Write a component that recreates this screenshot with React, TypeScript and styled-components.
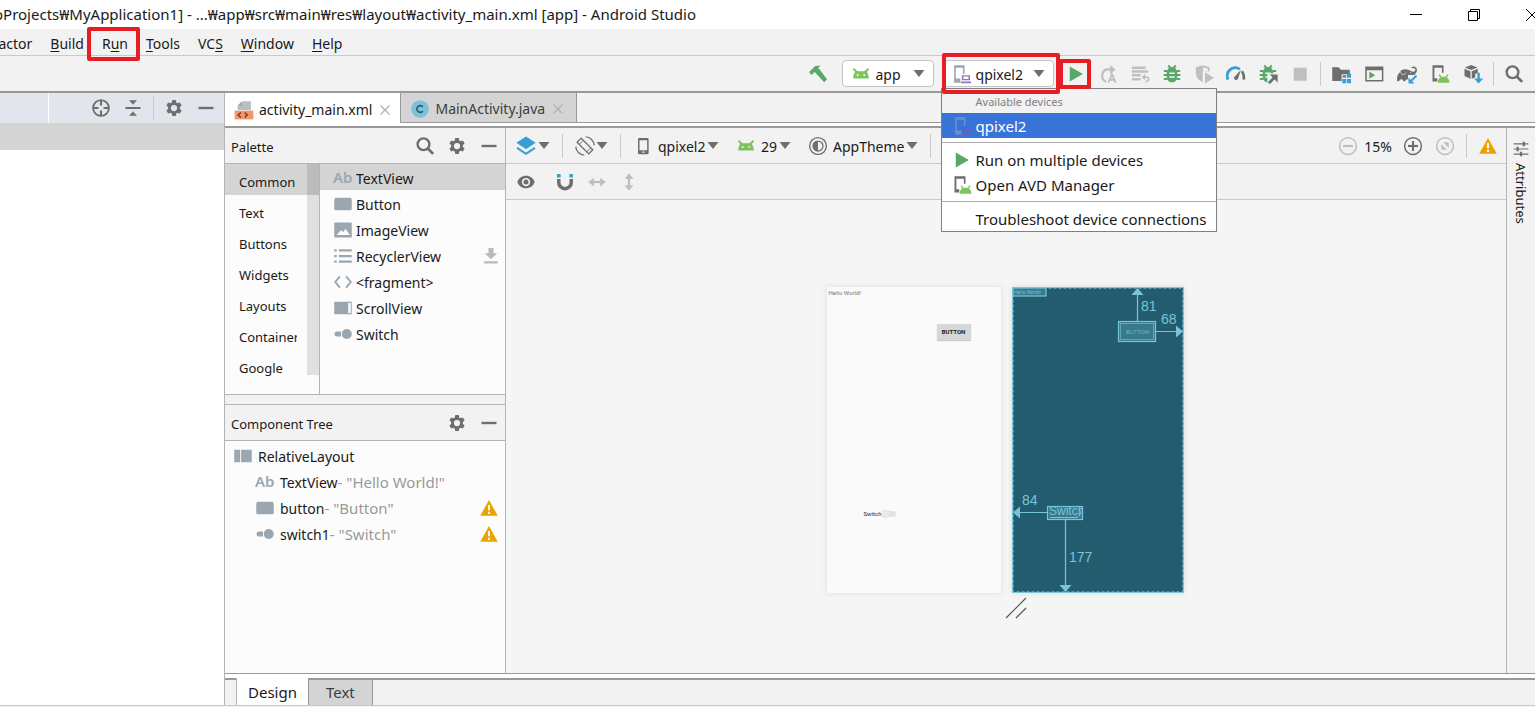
import React from 'react';
import styled, { createGlobalStyle, css } from 'styled-components';
import { SiGradle } from 'react-icons/si';

const c = {
  bar: '#f2f2f2',
  line: '#c9c9c9',
  mid: '#b4b4b4',
  dark: '#999999',
  selected: '#d4d4d4',
  icon: '#6e6e6e',
  off: '#bfbfbf',
  steel: '#9aa7b0',
  green: '#59a869',
  lime: '#7dc35b',
  blue: '#389fd6',
  red: '#e81c24',
  text: '#1a1a1a',
};

const GlobalStyle = createGlobalStyle`
  * { box-sizing: border-box; }
  body {
    margin: 0;
    overflow: hidden;
    background: ${c.bar};
    color: ${c.text};
    font-family: "Noto Sans", "Open Sans", "Noto Sans CJK KR", sans-serif;
    font-size: 14px;
    line-height: 20px;
  }
  button, select {
    margin: 0;
    padding: 0;
    border: 0;
    background: none;
    color: inherit;
    font: inherit;
    text-align: left;
    white-space: nowrap;
  }
  ul { list-style: none; margin: 0; padding: 0; }
  h2 { margin: 0; font-size: 13px; font-weight: 400; }
  svg { display: block; flex: none; }
`;

/* ---------- shared parts ---------- */

const Svg = styled.svg<{ $size?: number }>`
  width: ${(p) => p.$size ?? 20}px;
  height: ${(p) => p.$size ?? 20}px;
`;

const Icon = ({ size, children }: { size?: number; children: React.ReactNode }) => (
  <Svg $size={size} viewBox="0 0 16 16" fill="none" aria-hidden="true">
    {children}
  </Svg>
);

const CaretSvg = styled.svg`
  width: 12px;
  height: 8px;
  pointer-events: none;
`;
const Caret = () => (
  <CaretSvg viewBox="0 0 12 8" aria-hidden="true">
    <path d="M.5 0h11L6 7z" fill={c.icon} />
  </CaretSvg>
);

const Divider = styled.span<{ $gap?: number }>`
  width: 1px;
  height: 24px;
  margin: 0 ${(p) => p.$gap ?? 4}px;
  background: ${c.line};
  flex: none;
`;

const Spacer = styled.span`
  flex: 1;
`;

const IconButton = styled.button<{ $w?: number }>`
  width: ${(p) => p.$w ?? 32}px;
  height: 28px;
  display: flex;
  align-items: center;
  justify-content: center;
  flex: none;
`;

const marked = css`
  position: relative;
  &::after {
    content: '';
    position: absolute;
    z-index: 5;
    border: 4px solid ${c.red};
    border-radius: 2px;
    pointer-events: none;
  }
`;

/* ---------- icons ---------- */

const Gear = () => (
  <Icon>
    <path
      fill={c.icon}
      fillRule="evenodd"
      d="M6.6 1.6h2.8l.4 1.9 1.1.6 1.8-.6 1.4 2.4-1.4 1.3v1.5l1.4 1.3-1.4 2.4-1.8-.6-1.1.6-.4 2H6.6l-.4-2-1.1-.6-1.8.6-1.4-2.4 1.4-1.3V7.200L1.900 5.900l1.400-2.400 1.800.6 1.100-.6zM8 5.500a2.500 2.500 0 1 0 0 5 2.500 2.500 0 0 0 0-5z"
    />
  </Icon>
);
const Minus = () => (
  <Icon>
    <path d="M2 8h12" stroke={c.icon} strokeWidth="1.900" />
  </Icon>
);
const Search = () => (
  <Icon>
    <circle cx="6.800" cy="6.600" r="4.700" stroke={c.icon} strokeWidth="1.900" />
    <path d="M10.200 10l4.300 4.300" stroke={c.icon} strokeWidth="2.200" />
  </Icon>
);
const AndroidHead = ({ size }: { size?: number }) => (
  <Icon size={size}>
    <path d="M2 3.800l3 3M14 3.800l-3 3" stroke={c.lime} strokeWidth="1.500" />
    <path
      fill={c.lime}
      fillRule="evenodd"
      d="M1.800 11.500c0-2.300.8-4.300 2.200-5.900 1 .3 2.400.1 4 .1s3 .2 4-.1c1.400 1.600 2.200 3.600 2.200 5.900zM5.400 8a.8.8 0 1 0 0 1.600.8.8 0 0 0 0-1.600zm5.200 0a.8.8 0 1 0 0 1.600.8.8 0 0 0 0-1.600z"
    />
  </Icon>
);
const Hammer = () => (
  <Icon>
    <path
      fill={c.green}
      d="M.8 6.300L5.800 1.500l4.400-.4L8 3.200l1.300 1.200 5.900 7.800-2.300 2.300-6.800-7.400-.9-.8-2.300 2.500z"
    />
  </Icon>
);
const DevicePhone = ({ faded }: { faded?: boolean }) => (
  <Icon>
    <g opacity={faded ? 0.75 : 1}>
      <path
        fill={faded ? '#7f99c4' : c.steel}
        fillRule="evenodd"
        d="M2.500 1h8.300v7h-1.300V3H3.800v8.500h3.700V15H2.500z"
      />
      <path
        fill={faded ? '#7a55b0' : '#9575b8'}
        fillRule="evenodd"
        d="M8.700 9h6.500v4H8.700zm1.200 1v2H14v-2zM7.900 14H16v1.300H7.900z"
      />
    </g>
  </Icon>
);
const Play = () => (
  <Icon>
    <path d="M3 2v12L13.500 8z" fill={c.green} />
  </Icon>
);
const ApplyChanges = () => (
  <Icon>
    <path d="M6.500 14.200A5.300 5.300 0 0 1 7 4.300h4" stroke={c.off} strokeWidth="1.800" />
    <path d="M9.700.8l4.300 3.700-4.300 3.700z" fill={c.off} />
    <path d="M8.300 15l2.900-6.700L14.100 15M9.300 12.700h3.800" stroke={c.off} strokeWidth="1.500" />
  </Icon>
);
const ApplyCode = () => (
  <Icon>
    <path d="M1.500 3h11M1.500 6h13M1.500 9h7M1.500 12.200h7" stroke={c.off} strokeWidth="1.900" />
    <path d="M10.500 10.500h3a1.800 1.800 0 0 1 0 3.500h-1" stroke={c.off} strokeWidth="1.400" />
    <path d="M12 7.800v5.400L9.300 10.500z" fill={c.off} />
  </Icon>
);
const bug = (
  <>
    <path
      d="M5 1.200l1.800 2M11 1.200l-1.800 2M1.500 5.500h3M11.500 5.500h3M1.300 8.700h3M11.700 8.700h3M1.500 12h3M11.500 12h3"
      stroke={c.green}
      strokeWidth="1.600"
    />
    <path
      fill={c.green}
      fillRule="evenodd"
      d="M4.300 5C4.800 3.200 6 2.300 8 2.300S11.200 3.200 11.700 5c.6 1 .6 2 .6 3.500 0 4-1.500 6.200-4.300 6.200s-4.300-2.200-4.300-6.200c0-1.500 0-2.500.6-3.500zM5.800 6.700v1.200h4.400V6.700zm0 3v1.200h4.400V9.700z"
    />
  </>
);
const Debug = () => <Icon>{bug}</Icon>;
const AttachDebug = () => (
  <Icon>
    {bug}
    <path d="M7.500 7.500H16V16H7.500z" fill={c.bar} />
    <path d="M8.700 15.300L13.500 10.500" stroke={c.icon} strokeWidth="2.200" />
    <path d="M9.300 8.300h6.400v6.400z" fill={c.icon} />
  </Icon>
);
const Coverage = () => (
  <Icon>
    <path
      fill={c.off}
      fillRule="evenodd"
      d="M1.500 2.500L7 1l5.500 1.500V6H7v8.500C3.500 13 1.500 10.500 1.500 7zM7.200 2.700v3h3.800V3.600z"
    />
    <path d="M8.800 6.500v9L16 11z" fill={c.off} />
  </Icon>
);
const Profiler = () => (
  <Icon>
    <path d="M1.700 12.500A6.400 6.400 0 0 1 11 4.200" stroke={c.blue} strokeWidth="2.300" />
    <path d="M12.700 5.800c1.300 1.700 1.900 3.900 1.600 6.700" stroke={c.icon} strokeWidth="2" />
    <path d="M12 4.500L9.500 12a1.700 1.700 0 0 1-3-1.500z" fill={c.icon} />
  </Icon>
);
const Stop = () => (
  <Icon>
    <path d="M3 3h10.400v10.400H3z" fill={c.off} />
  </Icon>
);
const Structure = () => (
  <Icon>
    <path d="M1 2.500h5.200l1.600 2H15v3.700H8.500v5.300H1z" fill={c.icon} />
    <path d="M12.800 7.800H16v3.200h-3.200zM9 12h3.200v3.300H9zM12.800 12H16v3.300h-3.200z" fill={c.blue} />
    <path d="M9.300 8.800h2.900v2.200H9.300z" fill={c.blue} />
  </Icon>
);
const RunWindow = () => (
  <Icon>
    <path fill={c.icon} fillRule="evenodd" d="M1 2h14.500v12H1zm1.200 3v7.800h12.100V5z" />
    <path d="M4.200 6v5.800L9 8.900z" fill={c.green} />
  </Icon>
);
const GradleWrap = styled.span`
  position: relative;
  width: 20px;
  height: 20px;
  color: ${c.icon};
`;
const GradleArrow = styled.span`
  position: absolute;
  right: 0;
  bottom: 0;
  background: ${c.bar};
`;
const GradleSync = () => (
  <GradleWrap>
    <SiGradle size={20} />
    <GradleArrow>
      <Svg $size={9} viewBox="0 0 9 9" aria-hidden="true">
        <path d="M8.500.5L3 6" stroke={c.blue} strokeWidth="2" />
        <path d="M.5 2.500v6h6z" fill={c.blue} />
      </Svg>
    </GradleArrow>
  </GradleWrap>
);
const Avd = () => (
  <Icon>
    <path fill={c.icon} fillRule="evenodd" d="M2 1h8.800v6H9.500V3H3.500v8.300h2.300V14H2z" />
    <path d="M6 15c.2-2.800 1.800-4.800 4.800-4.800s4.600 2 4.800 4.800z" fill={c.lime} />
    <path d="M7.300 8.500L9 11M14.300 8.500L12.600 11" stroke={c.lime} strokeWidth="1.100" />
  </Icon>
);
const Sdk = () => (
  <Icon>
    <path d="M6.500.8l5 2-5 2-5-2z" fill={c.icon} />
    <path d="M1.200 3.800L6 5.700v6.100L1.200 9.600zM7 5.700l4.800-1.900v3.700H9.800v3L7 11.800z" fill={c.icon} />
    <path d="M12.500 7v6" stroke={c.blue} strokeWidth="1.900" />
    <path d="M8.800 11.500h7.400L12.500 15.500z" fill={c.blue} />
  </Icon>
);
const Target = () => (
  <Icon>
    <circle cx="8" cy="8" r="6.300" stroke={c.icon} strokeWidth="1.500" />
    <path d="M8 2v4M8 10v4M2 8h4M10 8h4" stroke={c.icon} strokeWidth="1.700" />
  </Icon>
);
const Collapse = () => (
  <Icon>
    <path d="M2 8h12" stroke={c.icon} strokeWidth="1.600" />
    <path d="M4.800 1.800h6.400L8 5.300zM4.800 14.200h6.400L8 10.700z" fill={c.icon} />
  </Icon>
);
const XmlFile = () => (
  <Icon>
    <path d="M7 1h6.500v7H3V5z" fill="#b7c0c7" />
    <path d="M6.300 1v3.500H2.800z" fill="#9aa7b0" />
    <path d="M.5 8.500h15v7H.5z" fill="#f4956c" />
    <path d="M5.500 10L3.300 12l2.200 2M8.500 10l2.200 2-2.200 2" stroke="#6b3a26" strokeWidth="1.100" />
  </Icon>
);
const JavaClass = () => (
  <Icon>
    <circle cx="8" cy="8" r="7" fill="#7bc1d9" />
    <path d="M10.300 6.300a2.700 2.700 0 1 0 0 3.400" stroke="#33576a" strokeWidth="1.300" />
  </Icon>
);
const CloseX = () => (
  <Icon size={16}>
    <path d="M3.500 3.500l9 9M12.500 3.500l-9 9" stroke="#b0b0b0" strokeWidth="1.200" />
  </Icon>
);
const Layers = () => (
  <Icon size={22}>
    <path d="M8 1l7 4.700L8 10.400 1 5.700z" fill={c.blue} />
    <path d="M1.500 9.300L8 13.700l6.500-4.400" stroke={c.blue} strokeWidth="1.500" />
  </Icon>
);
const Rotate = () => (
  <Icon>
    <path d="M4.900 1.700l9.300 9.300-3.200 3.300L1.700 5z" stroke={c.icon} strokeWidth="1.100" />
    <path d="M8.500.6a7.400 7.400 0 0 1 6.900 6.900M7.500 15.400A7.400 7.400 0 0 1 .6 8.500" stroke={c.icon} strokeWidth="1" />
    <path d="M3.300 6.700l3.300-3.200M9.400 12.700l3.300-3.200" stroke={c.icon} strokeWidth=".8" />
  </Icon>
);
const Phone = () => (
  <Icon>
    <path
      fill={c.icon}
      fillRule="evenodd"
      d="M5 1.500h6.500a1 1 0 0 1 1 1v11a1 1 0 0 1-1 1H5a1 1 0 0 1-1-1v-11a1 1 0 0 1 1-1zM5.200 3.300v8h6.100v-8zM7.400 12.400v1h1.800v-1z"
    />
  </Icon>
);
const Theme = () => (
  <Icon>
    <circle cx="8" cy="8" r="6.700" stroke={c.icon} strokeWidth="1.100" />
    <circle cx="8" cy="8" r="4" stroke={c.icon} />
    <path d="M8 4a4 4 0 0 0 0 8z" fill={c.icon} />
  </Icon>
);
const Zoom = ({ kind }: { kind: 'out' | 'in' | 'fit' }) => {
  const color = kind === 'in' ? c.icon : c.off;
  return (
    <Icon>
      <circle cx="8" cy="8" r="6.700" stroke={color} strokeWidth="1.200" />
      {kind !== 'fit' && <path d="M4 8h8" stroke={color} strokeWidth="1.700" />}
      {kind === 'in' && <path d="M8 4v8" stroke={color} strokeWidth="1.700" />}
      {kind === 'fit' && <path d="M6.500 5H11v4.500zM5 6.500V11h4.500z" fill={color} />}
    </Icon>
  );
};
const Warning = () => (
  <Icon>
    <path d="M8 1.500l7 12.700H1z" fill="#eda200" />
    <path d="M8 5.500v4.300M8 11v1.700" stroke="#fff" strokeWidth="1.600" />
  </Icon>
);
const Eye = () => (
  <Icon>
    <path
      fill={c.icon}
      fillRule="evenodd"
      d="M8 3c3.300 0 5.900 2 7 5-1.100 3-3.700 5-7 5S2.100 11 1 8c1.100-3 3.700-5 7-5zm0 1.700a3.300 3.300 0 1 0 0 6.600 3.300 3.300 0 0 0 0-6.600z"
    />
    <circle cx="8" cy="8" r="2" fill={c.icon} />
  </Icon>
);
const Magnet = () => (
  <Icon>
    <path d="M3 5.500V8.300a5 5 0 0 0 10 0V5.500" stroke={c.icon} strokeWidth="2.800" />
    <path d="M1.600 1.500h2.900v2.800H1.600zM11.500 1.500h2.900v2.800h-2.900z" fill={c.blue} />
  </Icon>
);
const Arrows = ({ vertical }: { vertical?: boolean }) => (
  <Icon>
    <g transform={vertical ? 'rotate(90 8 8)' : undefined}>
      <path d="M3 8h10" stroke={c.off} strokeWidth="1.800" />
      <path d="M5.500 4.500V11.500L1 8zM10.500 4.500V11.500L15 8z" fill={c.off} />
    </g>
  </Icon>
);
const Sliders = () => (
  <Icon size={18}>
    <path d="M1.500 3.500h13M1.500 8h13M1.500 12.500h13" stroke={c.icon} strokeWidth="1.100" />
    <path d="M10.500 1.500v4M5 6v4M8 10.500v4" stroke={c.icon} strokeWidth="2" />
  </Icon>
);
const Download = () => (
  <Icon>
    <path d="M6 1.500h4v4.300h3L8 10.500 3 5.800h3zM2.500 12.200h11V14h-11z" fill="#b3bcc3" />
  </Icon>
);
const WidgetIcon = ({ kind }: { kind: string }) => (
  <Icon>
    {kind === 'text' && (
      <text x="0" y="12.300" fontSize="12" fontWeight="600" fontFamily="Noto Sans" fill={c.steel}>
        Ab
      </text>
    )}
    {kind === 'button' && <rect x="1" y="3" width="14" height="10" rx="1.500" fill={c.steel} />}
    {kind === 'image' && (
      <path fill={c.steel} fillRule="evenodd" d="M1 2h14v12H1zM3 12h10.500l-3.500-5-2 2.800L6.500 8z" />
    )}
    {kind === 'list' && (
      <path
        d="M1 3.500h2M4.700 3.500H15M1 8h2M4.700 8H15M1 12.500h2M4.700 12.500H15"
        stroke={c.steel}
        strokeWidth="1.800"
      />
    )}
    {kind === 'fragment' && (
      <path d="M5.500 3.500L1.800 8l3.700 4.500M10.500 3.500L14.200 8l-3.700 4.500" stroke={c.steel} strokeWidth="1.500" />
    )}
    {kind === 'scroll' && (
      <path fill={c.steel} fillRule="evenodd" d="M1 3h14v10H1zM12.200 4v8h2V4z" />
    )}
    {kind === 'switch' && (
      <>
        <path d="M3.200 6h3.200v4H3.200a2 2 0 0 1 0-4z" fill={c.steel} />
        <circle cx="11" cy="8" r="4" fill={c.steel} />
      </>
    )}
    {kind === 'layout' && <path d="M1 3h4.700v10H1zM6.500 3H15v10H6.500z" fill={c.steel} />}
  </Icon>
);

/* ---------- title bar, menu bar, toolbar ---------- */

const Window = styled.div`
  min-height: 100vh;
  display: flex;
  flex-direction: column;
`;

const TitleBar = styled.header`
  height: 29px;
  display: flex;
  align-items: center;
  justify-content: space-between;
  background: #fff;
  overflow: hidden;
`;
const Title = styled.span`
  margin-left: -6px;
  padding-bottom: 1px;
  font-size: 15px;
  white-space: nowrap;
`;
const WindowButtons = styled.div`
  display: flex;
  margin-right: -26px;
`;
const WindowButton = styled(IconButton)`
  width: 58px;
  svg { width: 12px; height: 12px; }
`;

const MenuBar = styled.nav`
  height: 27px;
  display: flex;
  align-items: center;
  gap: 18px;
  padding-top: 3px;
  border-bottom: 1px solid ${c.line};
  u { text-underline-offset: 2px; }
`;
const MenuItem = styled.button<{ $marked?: boolean; $cut?: boolean }>`
  ${(p) => p.$cut && 'margin-left: -23px;'}
  ${(p) =>
    p.$marked &&
    css`
      ${marked}
      &::after { inset: -7px -12px -7px -15px; }
    `}
`;

const Toolbar = styled.div`
  height: 37px;
  display: flex;
  align-items: center;
  justify-content: flex-end;
  padding-right: 5px;
  border-bottom: 2px solid ${c.dark};
`;
const ToolGroup = styled.div<{ $gap?: number }>`
  display: flex;
  align-items: center;
  gap: ${(p) => p.$gap ?? 0}px;
`;
const comboBox = css`
  height: 27px;
  display: flex;
  align-items: center;
  gap: 5px;
  padding: 0 8px;
  border: 1px solid #c4c4c4;
  border-radius: 4px;
  background: #fff;
`;
const Combo = styled.label`
  ${comboBox}
  margin: 0 8px;
`;
const PlainSelect = styled.select`
  appearance: none;
  padding-top: 3px;
  outline: none;
`;
const ComboGap = styled.span`
  width: 1px;
`;
const DeviceWrap = styled.div`
  ${marked}
  &::after { inset: -7px -6px -7px 0; }
`;
const DeviceCombo = styled.button`
  ${comboBox}
  span { padding: 3px 5px 0 0; }
`;
const RunButton = styled(IconButton)`
  ${marked}
  margin-left: 6px;
  &::after { inset: -1px 1px -1px -1px; }
`;

const Popup = styled.div`
  position: absolute;
  z-index: 4;
  top: 28px;
  left: -1px;
  width: 276px;
  background: #fff;
  border: 1px solid #808080;
`;
const PopupTitle = styled.div`
  height: 24px;
  padding-left: 34px;
  background: ${c.bar};
  color: #808080;
  font-size: 11px;
  line-height: 26px;
`;
const PopupItem = styled.button<{ $active?: boolean }>`
  width: 100%;
  height: 25px;
  display: flex;
  align-items: center;
  gap: 4px;
  padding-left: 10px;
  font-size: 15px;
  ${(p) => p.$active && 'background: #3874d8; color: #fff;'}
  span:only-child { padding-left: 24px; }
`;
const PopupLine = styled.hr`
  height: 1px;
  margin: 4px 0;
  border: 0;
  background: #adadad;
`;

/* ---------- body ---------- */

const Body = styled.div`
  flex: 1;
  display: flex;
  min-height: 0;
`;
const ProjectPane = styled.aside`
  width: 224px;
  flex: none;
  background: #fff;
`;
const ProjectHeader = styled.div`
  height: 30px;
  display: flex;
  align-items: center;
  padding-right: 2px;
  background: #e2e6ec;
`;
const HeaderStub = styled.span`
  width: 49px;
  height: 30px;
  border-right: 1px solid #fff;
`;
const ProjectRow = styled.div`
  height: 27px;
  background: ${c.selected};
`;

const Editor = styled.main`
  flex: 1;
  min-width: 0;
  display: flex;
  flex-direction: column;
  border-left: 1px solid ${c.mid};
`;
const TabBar = styled.div`
  height: 30px;
  display: flex;
  border-bottom: 1px solid ${c.dark};
`;
const Tab = styled.button<{ $active?: boolean }>`
  height: ${(p) => (p.$active ? 30 : 29)}px;
  display: flex;
  align-items: center;
  gap: 5px;
  padding: 3px ${(p) => (p.$active ? 7 : 10)}px 0 9px;
  background: ${(p) => (p.$active ? '#fff' : c.selected)};
  ${(p) => !p.$active && `border-left: 1px solid ${c.dark}; border-right: 1px solid ${c.dark}; color: #3c3c3c;`}
`;
const Strip = styled.div<{ $bottom?: boolean }>`
  height: ${(p) => (p.$bottom ? 7 : 5)}px;
  background: #fff;
  border-bottom: 2px solid ${c.dark};
  ${(p) => p.$bottom && `border-top: 1px solid ${c.dark};`}
`;
const Work = styled.div`
  flex: 1;
  display: flex;
`;
const SideColumn = styled.section`
  width: 281px;
  flex: none;
  display: flex;
  flex-direction: column;
  border-right: 1px solid ${c.mid};
`;
const PanelHeader = styled.div`
  height: 36px;
  display: flex;
  align-items: center;
  padding-left: 6px;
  border-bottom: 1px solid ${c.mid};
  h2 { padding-top: 2px; }
`;
const PaletteBody = styled.div`
  height: 231px;
  display: flex;
  background: #fcfcfc;
  border-bottom: 1px solid ${c.mid};
`;
const Categories = styled.div`
  position: relative;
  width: 95px;
  flex: none;
  border-right: 1px solid ${c.mid};
`;
const Scrollbar = styled.div`
  position: absolute;
  top: 0;
  right: 0;
  width: 12px;
  height: 211px;
  background: rgba(0, 0, 0, 0.11);
`;
const Category = styled.button<{ $active?: boolean }>`
  display: block;
  width: 100%;
  height: 31px;
  padding: 4px 22px 0 14px;
  font-size: 13px;
  ${(p) => p.$active && `background: ${c.selected};`}
  span { display: block; overflow: hidden; }
`;
const WidgetList = styled.ul`
  flex: 1;
`;
const Row = styled.button<{ $active?: boolean; $depth?: number }>`
  width: 100%;
  height: 26px;
  display: flex;
  align-items: center;
  gap: 3px;
  padding: 0 4px 0 ${(p) => 13 + (p.$depth ?? 0)}px;
  ${(p) => p.$active && `background: ${c.selected};`}
`;
const RowText = styled.span`
  padding-top: 2px;
  em { font-style: normal; font-size: 15px; line-height: 16px; color: #999; }
`;
const WidgetRow = styled(Row)`
  padding-top: 2px;
`;
const Gutter = styled.div`
  height: 10px;
  border-bottom: 1px solid ${c.mid};
`;
const Tree = styled.ul`
  flex: 1;
  padding-top: 2px;
  background: #fcfcfc;
  ${Row} {
    gap: 5px;
    padding-right: 6px;
  }
`;

const Surface = styled.section`
  flex: 1;
  display: flex;
  flex-direction: column;
  background: #f5f5f5;
`;
const SurfaceBar = styled.div`
  height: 36px;
  display: flex;
  align-items: center;
  padding: 0 8px 0 9px;
  background: ${c.bar};
  border-bottom: 1px solid ${c.line};
`;
const DropIcon = styled.button`
  display: flex;
  align-items: center;
  gap: 1px;
`;
const DropSelect = styled.label<{ $after: number }>`
  display: flex;
  align-items: center;
  gap: 5px;
  margin-right: ${(p) => p.$after}px;
`;
const SelectPair = styled.span`
  display: flex;
  align-items: center;
  gap: 1px;
`;
const ZoomLevel = styled.span`
  padding: 2px 11px 0 6px;
`;
const BarGap = styled.span<{ $w: number }>`
  width: ${(p) => p.$w}px;
`;

const Canvas = styled.div`
  flex: 1;
  display: flex;
  flex-direction: column;
  align-items: center;
  padding: 87px 2px 0 0;
`;
const Previews = styled.div`
  display: flex;
  gap: 11px;
`;
const Screen = styled.div`
  position: relative;
  width: 174px;
  height: 306px;
  background: #fafafa;
  box-shadow: 0 0 6px rgba(0, 0, 0, 0.1);
  font: 6px/8px Roboto, sans-serif;
`;
const Hello = styled.span`
  position: absolute;
  left: 2px;
  top: 2px;
  color: #757575;
`;
const ScreenButton = styled.button`
  position: absolute;
  left: 110px;
  top: 37px;
  width: 34px;
  height: 16px;
  background: #d6d7d7;
  box-shadow: 0 1px 1px rgba(0, 0, 0, 0.2);
  font-weight: 700;
  text-align: center;
`;
const ScreenSwitch = styled.label`
  position: absolute;
  left: 37px;
  top: 222px;
  display: flex;
  align-items: center;
`;
const Blueprint = styled.svg`
  width: 172px;
  height: 306px;
  box-shadow: 0 0 6px rgba(0, 0, 0, 0.1);
`;
const Handle = styled.svg`
  width: 22px;
  height: 22px;
  margin: 4px 0 0 22px;
`;

const Attributes = styled.button`
  width: 29px;
  flex: none;
  display: flex;
  flex-direction: column;
  align-items: center;
  gap: 5px;
  padding-top: 12px;
  border-left: 1px solid ${c.mid};
  font-size: 13px;
  line-height: 18px;
  span { writing-mode: vertical-rl; }
`;

const BottomTabs = styled.div`
  height: 25px;
  display: flex;
  padding-left: 11px;
`;
const BottomTab = styled.button<{ $active?: boolean }>`
  padding: 0 ${(p) => (p.$active ? 11 : 17)}px 2px;
  border: solid ${c.dark};
  border-width: 0 1px 0 0;
  background: ${(p) => (p.$active ? '#fff' : c.selected)};
  font-size: 15px;
  ${(p) => (p.$active ? `border-left: 1px solid ${c.mid}; margin-top: -2px; padding-top: 2px;` : 'color: #3c3c3c;')}
`;
const BottomLine = styled.footer`
  height: 2px;
  border-top: 1px solid ${c.line};
`;

const categories = ['Common', 'Text', 'Buttons', 'Widgets', 'Layouts', 'Containers', 'Google'];
const widgets = [
  ['text', 'TextView'],
  ['button', 'Button'],
  ['image', 'ImageView'],
  ['list', 'RecyclerView'],
  ['fragment', '<fragment>'],
  ['scroll', 'ScrollView'],
  ['switch', 'Switch'],
];
const tree = [
  { kind: 'text', id: 'TextView', value: 'Hello World!', warn: false },
  { kind: 'button', id: 'button', value: 'Button', warn: true },
  { kind: 'switch', id: 'switch1', value: 'Switch', warn: true },
];

const ink = '#78c5da';

const BlueprintView = () => (
  <Blueprint viewBox="0 0 172 306" role="img" aria-label="Blueprint">
    <rect width="172" height="306" fill="#235c6e" />
    <rect x=".5" y=".5" width="171" height="305" fill="none" stroke={ink} />
    <rect x="1.500" y="1.500" width="169" height="303" fill="none" stroke={ink} strokeDasharray="3 2" opacity=".6" />
    <g fill="#39798b" stroke={ink} strokeWidth="1.200">
      <rect x="1" y="1" width="33" height="8" />
      <rect x="106.500" y="34.500" width="37" height="20" />
      <rect x="108.500" y="36.500" width="33" height="16" strokeWidth=".6" />
      <rect x="35.500" y="219.500" width="35" height="13" />
    </g>
    <g stroke={ink} strokeWidth="1.200">
      <path d="M125.500 34V6M144 44.500h22M35 225.500H6M53.500 233v66" />
    </g>
    <path
      fill={ink}
      d="M125.500 1l6 7h-12zM171 44.500l-7-6v12zM1 225.500l7-6v12zM53.500 305l6-7h-12z"
    />
    <g fill={ink} fontFamily="Liberation Sans, sans-serif" fontSize="14">
      <text x="129" y="24">81</text>
      <text x="149" y="37">68</text>
      <text x="10" y="218">84</text>
      <text x="57" y="275">177</text>
    </g>
    <g fill={ink} fontFamily="Roboto, sans-serif" fontSize="6">
      <text x="2" y="7" fontSize="5">Hello World!</text>
      <text x="114" y="47" opacity=".8">BUTTON</text>
    </g>
    <svg x="36" y="220" width="34" height="12">
      <text x="1" y="8" fontSize="12" fontFamily="Liberation Sans, sans-serif" fill={ink}>Switch</text>
      <path d="M2 10.500h26a5 5 0 0 0 4-7" fill="none" stroke={ink} />
    </svg>
  </Blueprint>
);

export default function App() {
  return (
    <Window>
      <GlobalStyle />
      <TitleBar>
        <Title>oProjects₩MyApplication1] - ...₩app₩src₩main₩res₩layout₩activity_main.xml [app] - Android Studio</Title>
        <WindowButtons>
          <WindowButton aria-label="Minimize">
            <svg viewBox="0 0 12 12"><path d="M0 5.500h12" stroke="#000" /></svg>
          </WindowButton>
          <WindowButton aria-label="Restore">
            <svg viewBox="0 0 12 12" fill="none" stroke="#000">
              <path d="M.5 2.500h9v9h-9zM2.500 2.500v-2h9v9h-2" />
            </svg>
          </WindowButton>
          <WindowButton aria-label="Close">
            <svg viewBox="0 0 12 12"><path d="M0 0l12 12M12 0L0 12" stroke="#000" /></svg>
          </WindowButton>
        </WindowButtons>
      </TitleBar>

      <MenuBar>
        <MenuItem $cut>Refactor</MenuItem>
        <MenuItem><u>B</u>uild</MenuItem>
        <MenuItem $marked>R<u>u</u>n</MenuItem>
        <MenuItem><u>T</u>ools</MenuItem>
        <MenuItem>VC<u>S</u></MenuItem>
        <MenuItem><u>W</u>indow</MenuItem>
        <MenuItem><u>H</u>elp</MenuItem>
      </MenuBar>

      <Toolbar>
        <IconButton aria-label="Build"><Hammer /></IconButton>
        <Combo>
          <AndroidHead />
          <PlainSelect aria-label="Run configuration"><option>app</option></PlainSelect>
          <ComboGap />
          <Caret />
        </Combo>
        <DeviceWrap>
          <DeviceCombo aria-haspopup="menu" aria-expanded="true">
            <DevicePhone />
            <span>qpixel2</span>
            <Caret />
          </DeviceCombo>
          <Popup role="menu">
            <PopupTitle>Available devices</PopupTitle>
            <PopupItem role="menuitem" $active><DevicePhone faded /><span>qpixel2</span></PopupItem>
            <PopupLine />
            <PopupItem role="menuitem"><Play /><span>Run on multiple devices</span></PopupItem>
            <PopupItem role="menuitem"><Avd /><span>Open AVD Manager</span></PopupItem>
            <PopupLine />
            <PopupItem role="menuitem"><span>Troubleshoot device connections</span></PopupItem>
          </Popup>
        </DeviceWrap>
        <RunButton aria-label="Run"><Play /></RunButton>
        <ToolGroup>
          <IconButton aria-label="Apply changes"><ApplyChanges /></IconButton>
          <IconButton aria-label="Apply code changes"><ApplyCode /></IconButton>
          <IconButton aria-label="Debug"><Debug /></IconButton>
          <IconButton aria-label="Run with coverage"><Coverage /></IconButton>
          <IconButton aria-label="Profile"><Profiler /></IconButton>
          <IconButton aria-label="Attach debugger"><AttachDebug /></IconButton>
          <IconButton aria-label="Stop"><Stop /></IconButton>
        </ToolGroup>
        <Divider $gap={4} />
        <ToolGroup $gap={1}>
          <IconButton aria-label="Project structure"><Structure /></IconButton>
          <IconButton aria-label="Run anything"><RunWindow /></IconButton>
          <IconButton aria-label="Sync project"><GradleSync /></IconButton>
          <IconButton aria-label="AVD Manager"><Avd /></IconButton>
          <IconButton aria-label="SDK Manager"><Sdk /></IconButton>
        </ToolGroup>
        <Divider $gap={4} />
        <IconButton aria-label="Search"><Search /></IconButton>
      </Toolbar>

      <Body>
        <ProjectPane>
          <ProjectHeader>
            <HeaderStub />
            <Spacer />
            <IconButton aria-label="Locate"><Target /></IconButton>
            <IconButton aria-label="Collapse all"><Collapse /></IconButton>
            <Divider />
            <IconButton aria-label="Project settings"><Gear /></IconButton>
            <IconButton aria-label="Hide project"><Minus /></IconButton>
          </ProjectHeader>
          <ProjectRow />
        </ProjectPane>

        <Editor>
          <TabBar>
            <Tab $active><XmlFile />activity_main.xml<CloseX /></Tab>
            <Tab><JavaClass />MainActivity.java<CloseX /></Tab>
          </TabBar>
          <Strip />

          <Work>
            <SideColumn>
              <PanelHeader>
                <h2>Palette</h2>
                <Spacer />
                <IconButton aria-label="Search palette"><Search /></IconButton>
                <IconButton aria-label="Palette settings"><Gear /></IconButton>
                <IconButton aria-label="Hide palette"><Minus /></IconButton>
              </PanelHeader>
              <PaletteBody>
                <Categories>
                  {categories.map((name, i) => (
                    <Category key={name} $active={i === 0}><span>{name}</span></Category>
                  ))}
                  <Scrollbar />
                </Categories>
                <WidgetList>
                  {widgets.map(([kind, name], i) => (
                    <li key={name}>
                      <WidgetRow $active={i === 0}>
                        <WidgetIcon kind={kind} />
                        <RowText>{name}</RowText>
                        {kind === 'list' && (<><Spacer /><Download /></>)}
                      </WidgetRow>
                    </li>
                  ))}
                </WidgetList>
              </PaletteBody>
              <Gutter />
              <PanelHeader>
                <h2>Component Tree</h2>
                <Spacer />
                <IconButton aria-label="Tree settings"><Gear /></IconButton>
                <IconButton aria-label="Hide tree"><Minus /></IconButton>
              </PanelHeader>
              <Tree>
                <li><Row $depth={-5}><WidgetIcon kind="layout" /><RowText>RelativeLayout</RowText></Row></li>
                {tree.map((n) => (
                  <li key={n.id}>
                    <Row $depth={17}>
                      <WidgetIcon kind={n.kind} />
                      <RowText>{n.id}<em>- "{n.value}"</em></RowText>
                      {n.warn && (<><Spacer /><Warning /></>)}
                    </Row>
                  </li>
                ))}
              </Tree>
            </SideColumn>

            <Surface>
              <SurfaceBar>
                <DropIcon aria-label="Design surface"><Layers /><Caret /></DropIcon>
                <Divider $gap={12} />
                <DropIcon aria-label="Orientation"><Rotate /><Caret /></DropIcon>
                <Divider $gap={12} />
                <DropSelect $after={17}>
                  <Phone />
                  <SelectPair>
                    <PlainSelect aria-label="Device"><option>qpixel2</option></PlainSelect><Caret />
                  </SelectPair>
                </DropSelect>
                <DropSelect $after={17}>
                  <AndroidHead />
                  <SelectPair>
                    <PlainSelect aria-label="API level"><option>29</option></PlainSelect><Caret />
                  </SelectPair>
                </DropSelect>
                <DropSelect $after={0}>
                  <Theme />
                  <SelectPair>
                    <PlainSelect aria-label="Theme"><option>AppTheme</option></PlainSelect><Caret />
                  </SelectPair>
                </DropSelect>
                <Divider $gap={12} />
                <Spacer />
                <IconButton $w={20} aria-label="Zoom out"><Zoom kind="out" /></IconButton>
                <ZoomLevel>15%</ZoomLevel>
                <IconButton $w={20} aria-label="Zoom in"><Zoom kind="in" /></IconButton>
                <BarGap $w={12} />
                <IconButton $w={20} aria-label="Zoom to fit"><Zoom kind="fit" /></IconButton>
                <Divider $gap={11} />
                <IconButton $w={20} aria-label="Warnings"><Warning /></IconButton>
              </SurfaceBar>
              <SurfaceBar>
                <IconButton $w={22} aria-label="View options"><Eye /></IconButton>
                <BarGap $w={12} />
                <IconButton aria-label="Autoconnect"><Magnet /></IconButton>
                <IconButton aria-label="Expand horizontally"><Arrows /></IconButton>
                <IconButton aria-label="Expand vertically"><Arrows vertical /></IconButton>
              </SurfaceBar>
              <Canvas>
                <Previews>
                  <Screen>
                    <Hello>Hello World!</Hello>
                    <ScreenButton>BUTTON</ScreenButton>
                    <ScreenSwitch>
                      Switch
                      <svg width="16" height="10" viewBox="0 0 16 10" aria-hidden="true">
                        <rect x="3" y="2" width="12" height="6" rx="3" fill="#e2e2e2" />
                        <circle cx="4.500" cy="5" r="4" fill="#ececec" stroke="#dcdcdc" strokeWidth=".5" />
                      </svg>
                    </ScreenSwitch>
                  </Screen>
                  <BlueprintView />
                </Previews>
                <Handle viewBox="0 0 22 22" aria-hidden="true">
                  <path d="M1 21L21 1M11 21L21 11" stroke="#555" strokeWidth="1.200" />
                </Handle>
              </Canvas>
            </Surface>

            <Attributes><Sliders /><span>Attributes</span></Attributes>
          </Work>

          <Strip $bottom />
          <BottomTabs>
            <BottomTab $active>Design</BottomTab>
            <BottomTab>Text</BottomTab>
          </BottomTabs>
        </Editor>
      </Body>
      <BottomLine />
    </Window>
  );
}
